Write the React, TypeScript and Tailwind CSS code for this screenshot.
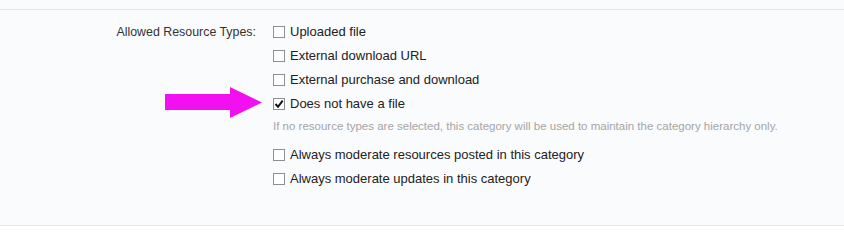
import React from 'react'

const Check = ({ checked }: { checked?: boolean }) => (
  <span className="w-[12px] h-[12px] border border-[#8f8f8f] bg-white flex items-center justify-center shrink-0">
    {checked && (
      <svg width="10" height="10" viewBox="0 0 10 10">
        <path d="M1.5 5 L4 7.8 L8.7 1.6" fill="none" stroke="#111" strokeWidth="2" />
      </svg>
    )}
  </span>
)

const Option = ({ label, checked }: { label: string; checked?: boolean }) => (
  <label className="h-6 flex items-center gap-[5px] text-[13px] text-[#222]">
    <Check checked={checked} />
    <span>{label}</span>
  </label>
)

const App = () => {
  return (
    <div className="w-[844px] h-[231px] bg-white" style={{ fontFamily: '"Liberation Sans", Arial, sans-serif' }}>
      <div className="h-[9px] bg-[#fafbfd]" />
      <div className="relative border-t border-b border-t-[#dde7ee] border-b-[#e4e6e8] bg-[#fafbfd] pt-[10px] h-[217px]">
        <div className="grid grid-cols-[256px_1fr] gap-x-[17px]">
          <div className="h-6 flex items-center justify-end text-[12.4px] text-[#333]">Allowed Resource Types:</div>
          <div className="flex flex-col">
            <Option label="Uploaded file" />
            <Option label="External download URL" />
            <Option label="External purchase and download" />
            <Option label="Does not have a file" checked />
            <p className="h-[14px] leading-[14px] mt-[3px] text-[11.5px] text-[#a5a5a5]">
              If no resource types are selected, this category will be used to maintain the category hierarchy only.
            </p>
            <div className="mt-[10px] flex flex-col">
              <Option label="Always moderate resources posted in this category" />
              <Option label="Always moderate updates in this category" />
            </div>
          </div>
        </div>
        <svg className="absolute left-[165px] top-[77px]" width="98" height="31" viewBox="0 0 98 31">
          <polygon points="0,7 65,7 65,0 97,15.5 65,31 65,23 0,23" fill="#f20ff0" />
        </svg>
      </div>
    </div>
  )
}

export default App
